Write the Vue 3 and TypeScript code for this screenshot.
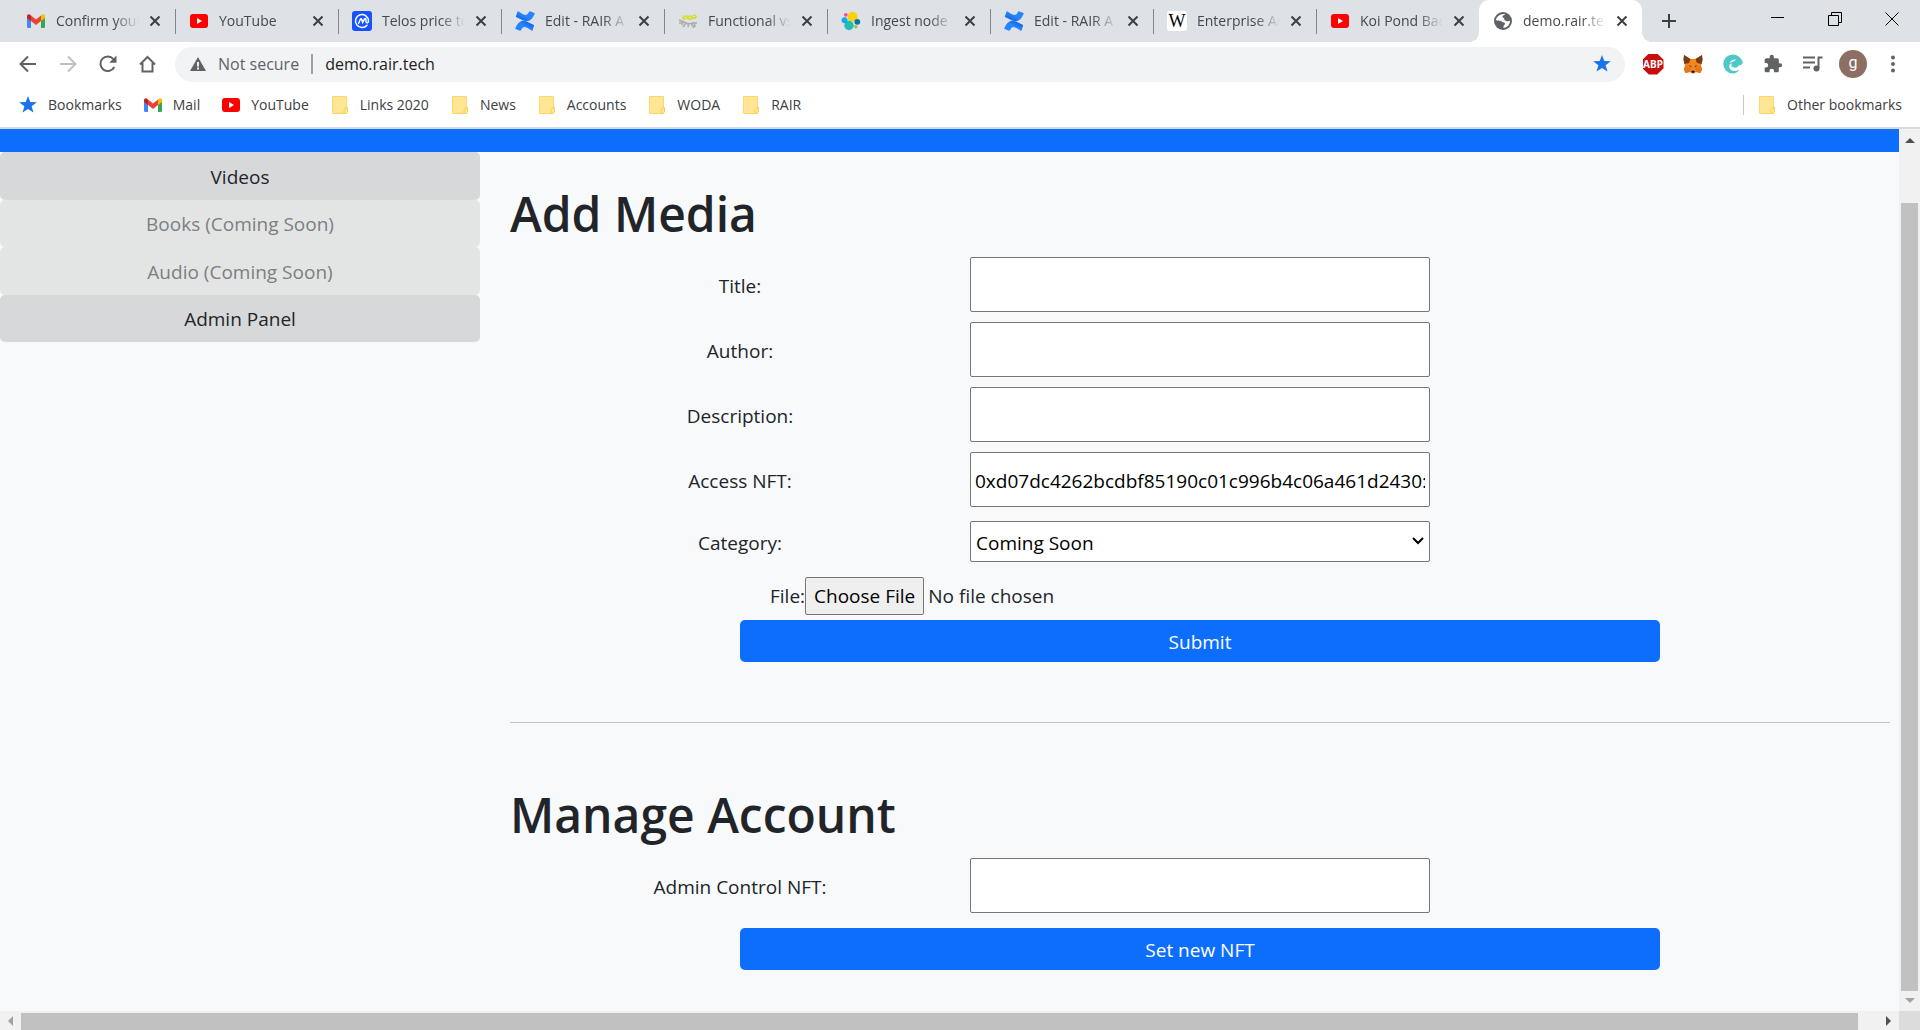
<script setup lang="ts">
import { ref } from 'vue'

interface Tab {
  title: string
  icon: string
  active?: boolean
}

interface Bookmark {
  label: string
  icon: string
}

interface Field {
  id: string
  label: string
}

const tabs: Tab[] = [
  { title: 'Confirm your', icon: 'gmail' },
  { title: 'YouTube', icon: 'youtube' },
  { title: 'Telos price to', icon: 'coin' },
  { title: 'Edit - RAIR A', icon: 'confluence' },
  { title: 'Functional vs', icon: 'bug' },
  { title: 'Ingest node', icon: 'elastic' },
  { title: 'Edit - RAIR A', icon: 'confluence' },
  { title: 'Enterprise Ar', icon: 'wiki' },
  { title: 'Koi Pond Bac', icon: 'youtube' },
  { title: 'demo.rair.tec', icon: 'globe', active: true },
]

const bookmarks: Bookmark[] = [
  { label: 'Bookmarks', icon: 'star' },
  { label: 'Mail', icon: 'gmail' },
  { label: 'YouTube', icon: 'youtube' },
  { label: 'Links 2020', icon: 'folder' },
  { label: 'News', icon: 'folder' },
  { label: 'Accounts', icon: 'folder' },
  { label: 'WODA', icon: 'folder' },
  { label: 'RAIR', icon: 'folder' },
]

const fields: Field[] = [
  { id: 'title', label: 'Title:' },
  { id: 'author', label: 'Author:' },
  { id: 'description', label: 'Description:' },
  { id: 'nft', label: 'Access NFT:' },
]

const values = ref<Record<string, string>>({
  title: '',
  author: '',
  description: '',
  nft: '0xd07dc4262bcdbf85190c01c996b4c06a461d2430:',
})
const category = ref('Coming Soon')
const adminNft = ref('')
const address = ref('demo.rair.tech')
</script>

<template>
  <svg class="sprite" aria-hidden="true">
    <defs>
      <linearGradient id="cf1" x1="1" y1="0" x2="0" y2="1">
        <stop offset="0" stop-color="#2684ff" /><stop offset="0.5" stop-color="#2684ff" /><stop offset="1" stop-color="#0052cc" />
      </linearGradient>
      <linearGradient id="cf2" x1="0" y1="1" x2="1" y2="0">
        <stop offset="0" stop-color="#2684ff" /><stop offset="0.5" stop-color="#2684ff" /><stop offset="1" stop-color="#0052cc" />
      </linearGradient>
    </defs>
    <symbol id="gmail" viewBox="0 0 20 20">
      <path d="M1 5v10.500q0 1.500 1.500 1.500H5V8z" fill="#4285f4" />
      <path d="M19 5v10.500q0 1.500-1.500 1.500H15V8z" fill="#34a853" />
      <path d="M5 4.500l5 4 5-4V10l-5 4-5-4z" fill="#ea4335" />
      <path d="M1 5.500V5q0-1.800 1.800-1.800.8 0 2.200 1.300V10L1 7z" fill="#c5221f" />
      <path d="M19 5.500V5q0-1.800-1.800-1.800-.8 0-2.200 1.300V10l4-3z" fill="#fbbc04" />
    </symbol>
    <symbol id="youtube" viewBox="0 0 20 20">
      <rect x="1" y="3" width="18" height="14" rx="3" fill="#f00" />
      <path d="M8 7v6l5-3z" fill="#fff" />
    </symbol>
    <symbol id="coin" viewBox="0 0 20 20">
      <rect width="20" height="20" rx="3" fill="#1652ff" />
      <path d="M15 14.200A6.500 6.500 0 1 1 16.500 10c0 2.300-2.300 2.500-2.500.5V9c0-1.800-1-2-1.700-.6L10.600 11.500 9.800 8.500c-.3-1-1-1-1.500 0L6.500 12.500" fill="none" stroke="#fff" stroke-width="1.500" stroke-linecap="round" />
    </symbol>
    <symbol id="confluence" viewBox="0 0 20 20">
      <path d="M2.500 0.500L1 5.300Q.8 6 1.500 6.300C6 8.300 10 11.500 14 9.800 17 8.500 18.200 6 19.700 2.800q.2-.5-.3-.8L15 .3q-.6-.2-.9.4C12.800 3 12 4.300 9.500 3.800 7.500 3.300 5 1.500 3.200.3q-.5-.2-.7.2z" fill="url(#cf1)" />
      <path d="M17.500 19.500l1.500-4.800q.2-.7-.5-1C14 11.700 10 8.500 6 10.200 3 11.500 1.800 14 .3 17.200q-.2.500.3.800L5 19.700q.6.200.9-.4C7.200 17 8 15.700 10.500 16.200c2 .5 4.500 2.300 6.300 3.500q.5.200.7-.2z" fill="url(#cf2)" />
    </symbol>
    <symbol id="bug" viewBox="0 0 20 20">
      <g fill="none" stroke="#a9abad" stroke-width="1.600">
        <path d="M1 9l5 2 4 2 5-1 4 0M1 12l4 0M5 10l-1 4M8 12l-3 4M11 12l-1 4M13 12l3 5M16 11l1 5" />
      </g>
      <path d="M4 8l1-4 2 1 2-1 1 1 3-1 1 1 3-2 2 2-1 3-3 0-3 1-3-1-3 1z" fill="#d6dc45" />
      <path d="M7 6.500h1.500M11 6.500h1.500M15 5.500h1.500" stroke="#eef0b0" />
    </symbol>
    <symbol id="elastic" viewBox="0 0 20 20">
      <circle cx="11.500" cy="5.800" r="5" fill="#fed10a" />
      <circle cx="8" cy="14.500" r="4.700" fill="#24bbb1" />
      <circle cx="3.500" cy="9.200" r="3" fill="#1ba9e5" />
      <circle cx="16.300" cy="10.800" r="2.900" fill="#0077a8" />
      <circle cx="4.800" cy="3.800" r="1.900" fill="#ef5098" />
      <circle cx="14.800" cy="15.800" r="1.800" fill="#93c83e" />
    </symbol>
    <symbol id="globe" viewBox="0 0 20 20">
      <circle cx="10" cy="10" r="9" fill="#5f6368" />
      <path d="M12.500 3.200c-1.300 1-2.800.8-3 2.300-.2 1.600 1.500.8 1.800 2.200.3 1.200-.3 1.500.8 1.700 1 .2 1.600 1.300 3 .8l2-.4A7.200 7.200 0 0 1 10.500 17v-1.700c0-1 1.700-1.200 1.500-2.800-.2-1.500-2.600-.8-3.500-2C7.700 9.400 4 10 2.900 9.300 3.200 5.500 8 1.800 12.500 3.200z" fill="#fff" />
    </symbol>
    <symbol id="star" viewBox="0 0 20 20">
      <path d="M10 1l2.300 6.100 6.500.2-5.200 4 1.900 6.300L10 13.900l-5.500 3.700 1.900-6.300-5.200-4 6.500-.2z" fill="#1a73e8" />
    </symbol>
    <symbol id="folder" viewBox="0 0 20 20">
      <path d="M2.500 1.500h14v17h-14z" fill="#ffe694" stroke="#f9d96c" />
      <path d="M15.500 12.500h2v4.500l-1.500 1.500h-2v-3z" fill="#ffe694" stroke="#f5cf52" />
    </symbol>
  </svg>

  <div class="window">
    <header class="chrome">
      <div class="tabstrip">
        <div v-for="(tab, i) in tabs" :key="i" class="tab" :class="{ active: tab.active }">
          <span v-if="tab.icon === 'wiki'" class="wiki">W</span>
          <svg v-else class="icon"><use :href="'#' + tab.icon" /></svg>
          <span class="tab-title">{{ tab.title }}</span>
          <button class="tab-close" aria-label="Close tab">
            <svg viewBox="0 0 16 16"><path d="M3.500 3.500l9 9m0-9l-9 9" fill="none" stroke="#3c4043" stroke-width="2" /></svg>
          </button>
        </div>
        <button class="new-tab" aria-label="New tab">
          <svg viewBox="0 0 16 16"><path d="M8 1v14M1 8h14" fill="none" stroke="#3c4043" stroke-width="2" /></svg>
        </button>
        <div class="controls">
          <button aria-label="Minimize"><svg viewBox="0 0 14 14"><path d="M0 5.500h13" /></svg></button>
          <button aria-label="Restore"><svg viewBox="0 0 14 14"><path d="M.5 3.500h10v10H.5zM3.500 3.500v-3h10v10h-3" /></svg></button>
          <button aria-label="Close window"><svg viewBox="0 0 14 14"><path d="M.5.5l13 13m0-13l-13 13" /></svg></button>
        </div>
      </div>

      <div class="toolbar">
        <button class="tool" aria-label="Back">
          <svg viewBox="0 0 20 20"><path d="M18 10H3M10 2.500L2.500 10l7.500 7.500" fill="none" stroke="#5f6368" stroke-width="2" /></svg>
        </button>
        <button class="tool" aria-label="Forward">
          <svg viewBox="0 0 20 20"><path d="M2 10h15M10 2.500l7.500 7.500-7.500 7.500" fill="none" stroke="#bdbfc1" stroke-width="2" /></svg>
        </button>
        <button class="tool" aria-label="Reload">
          <svg viewBox="0 0 20 20"><path d="M16.300 13A7.300 7.300 0 1 1 15.300 5" fill="none" stroke="#5f6368" stroke-width="2" /><path d="M18.500 1.500v7.300h-7.300z" fill="#5f6368" /></svg>
        </button>
        <button class="tool" aria-label="Home">
          <svg viewBox="0 0 20 20"><path d="M2 10.500L9.500 3l7.500 7.500M4.500 9v8.500h10V9" fill="none" stroke="#5f6368" stroke-width="2" /></svg>
        </button>
        <div class="omnibox">
          <svg class="warn" viewBox="0 0 18 18"><path d="M9 2l8 14H1z" fill="#5f6368" /><path d="M9 7v4.500M9 12.500v2" stroke="#f1f3f4" stroke-width="2" /></svg>
          <span class="insecure">Not secure</span>
          <span class="divider"></span>
          <input v-model="address" class="address" type="text" aria-label="Address" />
          <svg class="icon"><use href="#star" /></svg>
        </div>
        <button class="tool" aria-label="Adblock Plus">
          <span class="abp">ABP</span>
        </button>
        <button class="tool" aria-label="MetaMask">
          <svg viewBox="0 0 20 20">
            <path d="M1 1l6.500 4h5L19 1l.5 5-1.500 6 1 3.500-1.500 3.500-4.500-1-2 1.500H9L7 18l-4.500 1L1 15.500 2 12 .5 6z" fill="#f6851b" />
            <path d="M1 1l6.500 4L6 9l-4.500 1L.5 6zM19 1l-6.500 4L14 9l4.500 1 1-4z" fill="#763d16" />
            <path d="M2 12l5 1 1.500 5L7 18l-4.500 1L1 15.500zM18 12l-5 1-1.500 5 1.500 0 4.500 1 1.500-3.500z" fill="#e4761b" />
            <path d="M5.500 11.500l2.500.2.300 1.500zM14.500 11.500l-2.500.2-.3 1.500z" fill="#233447" />
            <path d="M7 16h6l-1.500 1h-3z" fill="#d7c1b3" /><path d="M8.500 16.500h3v2.200h-3z" fill="#161616" />
          </svg>
        </button>
        <button class="tool" aria-label="Wallet">
          <svg viewBox="0 0 20 20">
            <path d="M10 .5C14 .5 18.500 3.500 19.800 8.500 19.500 10.500 17.500 11.500 15.500 11.500L14 13.500Q10.500 14 8.500 12.500 8 10.500 9 9.200 6 10 6.200 13q1 4.200 5.800 4 2.500-.2 4.500-1.500Q14 19.500 9.500 19.500A9.500 9.500 0 0 1 10 .5z" fill="#4ec8c8" />
            <path d="M6.500 9q2-4 6.500-3.500-1 1.500-6.500 3.500z" fill="#fff" />
          </svg>
        </button>
        <button class="tool" aria-label="Extensions">
          <svg viewBox="0 0 24 24"><path d="M20.500 11H19V7c0-1.100-.9-2-2-2h-4V3.500a2.500 2.500 0 0 0-5 0V5H4c-1.100 0-2 .9-2 2v3.800h1.500a2.700 2.700 0 0 1 0 5.400H2V20c0 1.100.9 2 2 2h3.800v-1.500a2.700 2.700 0 0 1 5.400 0V22H17c1.100 0 2-.9 2-2v-4h1.500a2.500 2.500 0 0 0 0-5z" fill="#5f6368" /></svg>
        </button>
        <button class="tool" aria-label="Media">
          <svg viewBox="0 0 20 20"><path d="M0 3.500h12M0 8.500h12M0 13.500h7M19.500 3.500h-4V14" fill="none" stroke="#5f6368" stroke-width="2" /><circle cx="13.500" cy="14.500" r="3" fill="#5f6368" /></svg>
        </button>
        <button class="tool" aria-label="Profile"><span class="avatar">g</span></button>
        <button class="tool" aria-label="Menu">
          <svg viewBox="0 0 20 20" fill="#5f6368"><circle cx="10" cy="3.500" r="2" /><circle cx="10" cy="10" r="2" /><circle cx="10" cy="16.500" r="2" /></svg>
        </button>
      </div>

      <nav class="bookmarks" aria-label="Bookmarks bar">
        <a v-for="b in bookmarks" :key="b.label" href="#" class="bookmark">
          <svg class="icon"><use :href="'#' + b.icon" /></svg><span>{{ b.label }}</span>
        </a>
        <span class="grow"></span>
        <span class="bar-divider"></span>
        <a href="#" class="bookmark"><svg class="icon"><use href="#folder" /></svg><span>Other bookmarks</span></a>
      </nav>
    </header>

    <div class="viewport">
      <div class="page-clip">
        <div class="page">
          <div class="banner"></div>
          <div class="columns">
            <nav class="side" aria-label="Sections">
              <button type="button">Videos</button>
              <button type="button" disabled>Books (Coming Soon)</button>
              <button type="button" disabled>Audio (Coming Soon)</button>
              <button type="button">Admin Panel</button>
            </nav>
            <main class="main">
              <h1>Add Media</h1>
              <form @submit.prevent>
                <div v-for="f in fields" :key="f.id" class="row">
                  <label :for="f.id">{{ f.label }}</label>
                  <input :id="f.id" v-model="values[f.id]" type="text" />
                </div>
                <div class="row select-row">
                  <label for="category">Category:</label>
                  <div class="select-box">
                    <select id="category" v-model="category">
                      <option>Coming Soon</option>
                    </select>
                    <svg class="chevron" viewBox="0 0 12 8" aria-hidden="true"><path d="M1 1l5 5 5-5" fill="none" stroke="#000" stroke-width="2" /></svg>
                  </div>
                </div>
                <div class="file-row">
                  <label for="file">File:</label>
                  <input id="file" type="file" />
                </div>
                <button class="primary" type="submit">Submit</button>
              </form>
              <hr />
              <h1>Manage Account</h1>
              <form @submit.prevent>
                <div class="row">
                  <label for="admin-nft">Admin Control NFT:</label>
                  <input id="admin-nft" v-model="adminNft" type="text" />
                </div>
                <button class="primary spaced" type="submit">Set new NFT</button>
              </form>
            </main>
          </div>
        </div>
      </div>
      <div class="scroll-y" aria-hidden="true">
        <svg viewBox="0 0 21 20"><path d="M6 14h10l-5-5z" fill="#505050" /></svg>
        <span class="space-y"></span>
        <span class="thumb-y"></span>
        <svg viewBox="0 0 21 20"><path d="M6 7h10l-5 5z" fill="#a3a3a3" /></svg>
      </div>
      <div class="scroll-x" aria-hidden="true">
        <svg viewBox="0 0 21 19"><path d="M13 5v10l-5-5z" fill="#a3a3a3" /></svg>
        <span class="thumb-x"></span>
        <span class="space-x"></span>
        <svg viewBox="0 0 21 19"><path d="M8 5v10l5-5z" fill="#505050" /></svg>
      </div>
      <div class="corner"></div>
    </div>
  </div>
</template>

<style>
body {
  margin: 0;
  overflow: hidden;
}
</style>

<style scoped>
* {
  box-sizing: border-box;
}

.sprite {
  position: absolute;
  width: 0;
  height: 0;
}

.window {
  display: flex;
  flex-direction: column;
  height: 100vh;
  font-family: 'Open Sans', 'Noto Sans', sans-serif;
  background: #fff;
  overflow: hidden;
}

button {
  font: inherit;
  padding: 0;
  border: 0;
  background: none;
}

.icon {
  flex: none;
  width: 20px;
  height: 20px;
}

/* Tab strip */
.tabstrip {
  display: flex;
  height: 42px;
  padding-left: 12px;
  background: #dee1e6;
}

.tab {
  position: relative;
  display: flex;
  align-items: center;
  flex: 0 1 163px;
  min-width: 0;
  padding: 0 12px 0 14px;
  font-size: 14px;
  line-height: 20px;
  color: #45494d;
}

.tab::after {
  content: '';
  position: absolute;
  right: -1px;
  top: 9px;
  width: 1px;
  height: 25px;
  background: #80868b;
}

.tab.active {
  background: #fff;
  border-radius: 10px 10px 0 0;
}

.tab:nth-last-child(4)::after {
  z-index: 1;
}

.tab.active::before,
.tab.active::after {
  content: '';
  position: absolute;
  top: auto;
  bottom: 0;
  width: 10px;
  height: 10px;
}

.tab.active::before {
  left: -10px;
  background: radial-gradient(circle at 0 0, #dee1e6 10px, #fff 10px);
}

.tab.active::after {
  right: -10px;
  background: radial-gradient(circle at 100% 0, #dee1e6 10px, #fff 10px);
}

.tab:nth-last-child(4)::after {
  display: block;
}

.tab:has(+ .active)::after {
  display: none;
}

.tab-title {
  flex: 1;
  min-width: 0;
  margin: 0 8px 0 10px;
  overflow: hidden;
  white-space: nowrap;
  mask-image: linear-gradient(to right, #000 70%, transparent);
}

.tab-close,
.tab-close svg {
  width: 16px;
  height: 16px;
  display: block;
}

.wiki {
  flex: none;
  width: 20px;
  height: 20px;
  border-radius: 3px;
  background: #fff;
  color: #000;
  font: 18px/20px 'Liberation Serif', serif;
  text-align: center;
}

.new-tab {
  width: 54px;
  display: grid;
  place-items: center;
}

.new-tab svg {
  width: 16px;
  height: 16px;
}

.controls {
  display: flex;
  align-items: flex-start;
  margin-left: auto;
}

.controls button {
  width: 57px;
  height: 37px;
  display: grid;
  place-items: center;
}

.controls svg {
  width: 14px;
  height: 14px;
  fill: none;
  stroke: #000;
}

/* Toolbar */
.toolbar {
  display: flex;
  align-items: center;
  height: 44px;
  padding: 0 7px 0 8px;
}

.tool {
  width: 40px;
  height: 40px;
  display: grid;
  place-items: center;
}

.tool svg {
  width: 20px;
  height: 20px;
}

.omnibox {
  display: flex;
  align-items: center;
  flex: 1;
  height: 35px;
  margin: 0 8px 0 7px;
  padding: 0 13px 0 14px;
  border-radius: 18px;
  background: #f1f3f4;
  font-size: 16px;
}

.warn {
  width: 18px;
  height: 18px;
  margin-right: 11px;
}

.insecure {
  color: #5f6368;
}

.divider {
  width: 2px;
  height: 20px;
  margin: 0 12px;
  background: #9aa0a6;
}

.address {
  flex: 1;
  min-width: 0;
  padding: 0;
  border: 0;
  outline: 0;
  background: none;
  font: inherit;
  color: #202124;
}

.abp {
  width: 21px;
  height: 21px;
  background: #c70d0d;
  clip-path: polygon(30% 0, 70% 0, 100% 30%, 100% 70%, 70% 100%, 30% 100%, 0 70%, 0 30%);
  color: #fff;
  font: bold 10px/21px 'Noto Sans', sans-serif;
  text-align: center;
}

.avatar {
  width: 28px;
  height: 28px;
  border-radius: 50%;
  background: #8d6e63;
  color: #fff;
  font: 16px/26px Roboto, sans-serif;
  text-align: center;
}

/* Bookmarks bar */
.bookmarks {
  display: flex;
  align-items: center;
  gap: 21px;
  height: 43px;
  padding: 0 18px 3px;
  border-bottom: 2px solid #d8dade;
}

.bookmark {
  display: flex;
  align-items: center;
  gap: 10px;
  font-size: 14px;
  line-height: 20px;
  color: #3c4043;
  text-decoration: none;
  white-space: nowrap;
}

.grow {
  flex: 1;
}

.bar-divider {
  width: 1px;
  height: 20px;
  margin-right: -8px;
  background: #c6c9cd;
}

/* Page viewport with its scroll bars */
.viewport {
  flex: 1;
  min-height: 0;
  display: grid;
  grid-template: 1fr 19px / 1fr 21px;
}

.page-clip {
  min-width: 0;
  min-height: 0;
  overflow: hidden;
  background: #f8f9fb;
}

.page {
  width: 100vw;
  font-size: 19px;
  line-height: 30px;
  color: #212529;
}

.banner {
  height: 23px;
  background: #0d6efd;
}

.columns {
  display: grid;
  grid-template-columns: 1fr 3fr;
  align-items: start;
}

.side {
  display: grid;
  grid-auto-rows: 1fr;
  height: 190px;
}

.side button {
  padding-top: 2px;
  border-radius: 5px;
  background: #d7d8da;
  color: #212529;
}

.side button:disabled {
  background: #e3e5e4;
  color: #7c7f82;
}

.main {
  padding: 30px;
}

h1 {
  margin: 0 0 11px;
  font-size: 48px;
  line-height: 64px;
  font-weight: 600;
}

.row {
  display: grid;
  grid-template-columns: repeat(3, 1fr);
  align-items: center;
  margin-bottom: 10px;
}

.row label {
  padding-top: 2px;
  text-align: center;
}

.row input,
.row select {
  display: block;
  width: 100%;
  height: 55px;
  padding: 2px 4px 0;
  border: 1px solid #767676;
  border-radius: 2px;
  background: #fff;
  color: #000;
  font: inherit;
}

.row select {
  appearance: none;
  height: 41px;
  padding: 2px 5px 0;
}

.select-box {
  position: relative;
}

.chevron {
  position: absolute;
  right: 6px;
  top: 16px;
  width: 12px;
  height: 8px;
  pointer-events: none;
}

.select-row {
  padding: 4px 0 5px;
}

.file-row {
  display: flex;
  align-items: center;
  width: 66.666%;
  margin: 0 auto 5px;
  padding-left: 30px;
}

.file-row input {
  flex: 1;
  font: inherit;
  height: 38px;
}

.file-row input::file-selector-button {
  height: 38px;
  padding: 0 8px;
  border: 1px solid #767676;
  border-radius: 2px;
  background: #efefef;
  color: #000;
  font: inherit;
}

.primary {
  display: block;
  width: 66.666%;
  height: 42px;
  margin: 0 auto;
  padding-top: 2px;
  border-radius: 5px;
  background: #0d6efd;
  color: #fff;
}

.spaced {
  margin-top: 15px;
}

hr {
  height: 1px;
  margin: 60px 0;
  border: 0;
  background: #c3c5c8;
}

.scroll-y {
  display: flex;
  flex-direction: column;
  align-items: center;
  background: #f1f1f1;
}

.scroll-y svg {
  width: 21px;
  height: 20px;
}

.space-y {
  flex: 54;
}

.thumb-y {
  flex: 788;
  width: 17px;
  background: #c1c1c1;
}

.scroll-x {
  display: flex;
  align-items: stretch;
  background: #f1f1f1;
}

.scroll-x svg {
  width: 21px;
  height: 19px;
}

.thumb-x {
  flex: 1837;
  margin-top: 2px;
  background: #c1c1c1;
}

.space-x {
  flex: 20;
}

.corner {
  background: #dcdcdc;
}
</style>
